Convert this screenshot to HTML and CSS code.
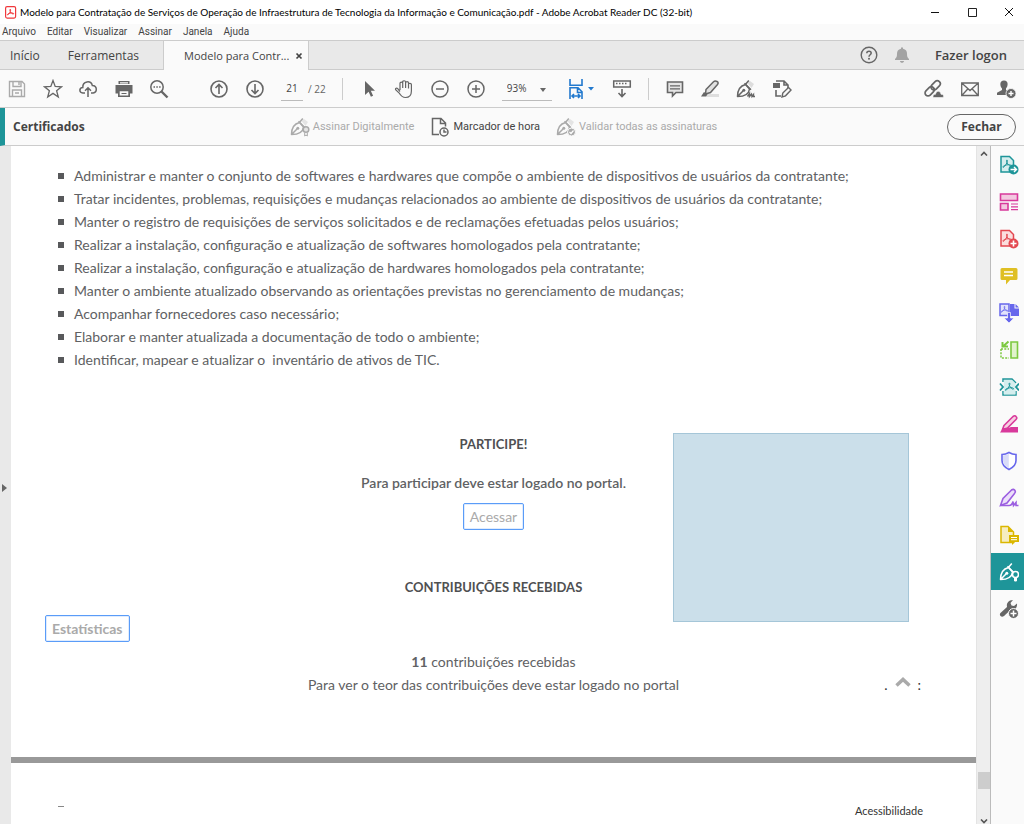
FILE: index.html
```html
<!DOCTYPE html>
<html lang="pt-BR">
<head>
<meta charset="utf-8">
<meta name="viewport" content="width=device-width, initial-scale=1">
<title>Modelo para Contratação de Serviços - Adobe Acrobat Reader DC (32-bit)</title>
<link rel="stylesheet" href="styles.css">
</head>
<body>
<svg class="defs" aria-hidden="true">
  <symbol id="acro" viewBox="0 0 10 10"><path d="M4.800 1C6.200 1 5 4.200 3.500 6.200S.8 9 .9 7.900 4 5.800 6.500 5.700s3.300 1.500 2 1.500S3.600 3 4.800 1z" fill="none" stroke="currentColor" stroke-width="1"/></symbol>
  <symbol id="pen" viewBox="0 0 20 20"><path d="M1.500 17.500C1.500 11 3.500 7 9.500 5.500L13.500 10C13 15 8 17.500 1.500 17.500zM2 17 7 12" fill="none" stroke="currentColor" stroke-width="1.500" stroke-linejoin="round"/><path d="M8.500 4.200 15 10.800M9.800 5 12.800 1.500" fill="none" stroke="currentColor" stroke-width="1.500"/><circle cx="7.800" cy="11.200" r="1.500" fill="currentColor"/></symbol>
</svg>
<div class="app">
  <header class="titlebar">
    <svg class="app-icon" viewBox="0 0 12 13"><rect x=".6" y=".6" width="10" height="11.500" rx="1.500" fill="#fff" stroke="#f0383c" stroke-width="1.200"/><path d="M5 3.300C6.400 3.300 5.300 6 4.200 7.500S2.200 9.300 2.400 8.500 4.800 7 6.700 6.900s2.700 1.200 1.500 1.200S4 4.800 5 3.300z" fill="#f0383c" stroke="#f0383c" stroke-width=".8"/></svg>
    <h1>Modelo para Contratação de Serviços de Operação de Infraestrutura de Tecnologia da Informação e Comunicação.pdf - Adobe Acrobat Reader DC (32-bit)</h1>
    <div class="window-buttons">
      <button aria-label="Minimizar"><svg viewBox="0 0 10 10"><path d="M1 5.500H9" stroke="#111"/></svg></button>
      <button aria-label="Maximizar"><svg viewBox="0 0 10 10"><path d="M1.500 1.500h8v8h-8z" fill="none" stroke="#222"/></svg></button>
      <button aria-label="Fechar janela"><svg viewBox="0 0 10 10"><path d="M1 1 9 9M9 1 1 9" stroke="#111"/></svg></button>
    </div>
  </header>
  <nav class="menubar"><button>Arquivo</button><button>Editar</button><button>Visualizar</button><button>Assinar</button><button>Janela</button><button>Ajuda</button></nav>
  <div class="tabs">
    <button class="tab">Início</button>
    <button class="tab tab-tools">Ferramentas</button>
    <div class="tab-open"><span>Modelo para Contr...</span><button aria-label="Fechar guia"><svg viewBox="0 0 8 8"><path d="M1.500 1.500 6.500 6.500M6.500 1.500 1.500 6.500" stroke="#444" stroke-width="1.700"/></svg></button></div>
    <div class="account">
      <button class="icon" aria-label="Ajuda"><svg viewBox="0 0 20 20"><circle cx="10" cy="10" r="7.800" fill="none" stroke="#666" stroke-width="1.400"/><path d="M7.800 8.200C7.800 5.400 12.200 5.600 12.200 8c0 1.800-2.200 1.800-2.200 3.800" fill="none" stroke="#666" stroke-width="1.500"/><circle cx="10" cy="13.800" r="1" fill="#666"/></svg></button>
      <button class="icon" aria-label="Notificações"><svg viewBox="0 0 20 20"><path d="M9 2.500h2v1.200c3 .5 4 2.500 4 5 0 3 .5 4 2 5.300v1H3v-1c1.500-1.300 2-2.300 2-5.300 0-2.500 1-4.500 4-5zM8 16h4c0 2.400-4 2.400-4 0z" fill="#a3a3a3"/></svg></button>
      <button class="logon">Fazer logon</button>
    </div>
  </div>
  <div class="toolbar">
    <div class="group five">
      <button class="icon faded" aria-label="Salvar"><svg viewBox="0 0 20 20" fill="none" stroke="currentColor" stroke-width="1.400"><path d="M2.500 2.500H15L17.500 5v12.500h-15zM6 2.500v5h8v-5M12 3v3M5.500 17.500v-6.500h9v6.500M8 14h4"/></svg></button>
      <button class="icon" aria-label="Favorito"><svg viewBox="0 0 20 20"><path d="M10 1.500 12.200 7.400 18.500 7.800 13.600 11.700 15.300 18 10 14.400 4.700 18 6.400 11.700 1.500 7.800 7.800 7.400z" fill="none" stroke="currentColor" stroke-width="1.300"/></svg></button>
      <button class="icon" aria-label="Enviar à nuvem"><svg viewBox="0 0 20 20" fill="none" stroke="currentColor" stroke-width="1.500"><path d="M7 14H4.800C.8 13.600 1 8.600 4.800 8.500 4.500 1.700 13 1.200 14.300 6.400c5.300.1 5 7.200.9 7.600H13M10 18V9M7 11.700l3-3 3 3"/></svg></button>
      <button class="icon" aria-label="Imprimir"><svg viewBox="0 0 20 20"><path d="M4.500 2h11v3h-11zM1.500 6h17v8.500h-2.500V11H4v3.500H1.500zM4 11h12v7H4z" fill="currentColor"/><path d="M5.700 12.300h8.600v4.200H5.700zM6 3.200h8v1.200H6z" fill="#fafafa"/><path d="M7.500 14.500h5" stroke="currentColor"/></svg></button>
      <button class="icon" aria-label="Localizar"><svg viewBox="0 0 20 20"><circle cx="8" cy="8" r="6.200" fill="none" stroke="currentColor" stroke-width="1.500"/><path d="M12.500 12.500 18.500 18.500" stroke="currentColor" stroke-width="2.400"/><path d="M4.500 8h1.500M7.300 8h1.500M10.100 8h1.500" stroke="currentColor" stroke-width="1.500"/></svg></button>
    </div>
    <div class="group pages">
      <button class="icon" aria-label="Página anterior"><svg viewBox="0 0 20 20" fill="none" stroke="currentColor" stroke-width="1.600"><circle cx="10" cy="10" r="8"/><path d="M10 15V6M6.500 9 10 5.500 13.500 9"/></svg></button>
      <button class="icon" aria-label="Próxima página"><svg viewBox="0 0 20 20" fill="none" stroke="currentColor" stroke-width="1.600"><circle cx="10" cy="10" r="8"/><path d="M10 5v9M6.500 11 10 14.500 13.500 11"/></svg></button>
      <label class="page-number"><input value="21" aria-label="Página atual"><span>/ 22</span></label>
    </div>
    <div class="divider"></div>
    <div class="group four">
      <button class="icon" aria-label="Selecionar"><svg viewBox="0 0 20 20"><path d="M6 2v14l3.600-3.300 2.300 5 2.200-1-2.300-5h4.200z" fill="currentColor"/></svg></button>
      <button class="icon" aria-label="Mão"><svg viewBox="0 0 20 20" fill="none" stroke="currentColor" stroke-width="1.200"><path d="M6 11V4.300c0-1.700 2.700-1.700 2.700 0V9 3c0-1.700 2.900-1.700 2.900 0v6-5.200c0-1.600 2.900-1.600 2.900 0V9.500 5.500c0-1.600 2.900-1.500 2.900 0V12c0 4-2.100 6.500-5.900 6.500-3.300 0-4.600-1.500-6.300-4.500L1.600 10.600c-.6-1.500 1.300-1.800 2.100-.9L6 12.500"/></svg></button>
      <button class="icon" aria-label="Reduzir"><svg viewBox="0 0 20 20" fill="none" stroke="currentColor" stroke-width="1.500"><circle cx="10" cy="10" r="8"/><path d="M6 10h8"/></svg></button>
      <button class="icon" aria-label="Ampliar"><svg viewBox="0 0 20 20" fill="none" stroke="currentColor" stroke-width="1.500"><circle cx="10" cy="10" r="8"/><path d="M6 10h8M10 6v8"/></svg></button>
    </div>
    <label class="zoom"><select aria-label="Zoom"><option>93%</option></select><svg viewBox="0 0 6 4"><path d="M0 0h6L3 4z" fill="#666"/></svg></label>
    <button class="fit" aria-label="Ajustar à largura"><svg viewBox="0 0 26 20"><g fill="none" stroke="#2279ce" stroke-width="1.600"><path d="M2 0v6.300h12V0M2 20V8.800h8l4 4V20M9.500 9v4.500H14M4 17h8M6 15l-2 2 2 2M10 15l2 2-2 2"/></g><path d="M20 8h6l-3 3.500z" fill="#2279ce"/></svg></button>
    <button class="icon" aria-label="Rolagem"><svg viewBox="0 0 20 20"><path d="M1.700 2h16.600v6H1.700z" fill="none" stroke="currentColor" stroke-width="1.500"/><path d="M4 4.500h1.500M7 4.500h1.500M10 4.500h1.500M13 4.500h1.500M10 10v8M6.500 14l3.500 3.500 3.500-3.500" fill="none" stroke="currentColor" stroke-width="1.600"/></svg></button>
    <div class="divider"></div>
    <div class="group four">
      <button class="icon" aria-label="Comentário"><svg viewBox="0 0 20 20"><path d="M2.500 3h15v10.500H11L7.500 17v-3.500h-5z" fill="#e4e4e4" stroke="currentColor" stroke-width="1.600"/><path d="M5 6.800h10M5 9.800h10" stroke="currentColor" stroke-width="1.300"/></svg></button>
      <button class="icon" aria-label="Realçar"><svg viewBox="0 0 20 20"><path d="M7 15h12v3H6z" fill="#dedede"/><path d="M6 10.500 13.500 2.800Q15 1.500 17 2.500T17.500 5.500L10.500 13.500 5.500 15z" fill="#e0e0e0" stroke="currentColor" stroke-width="1.500"/><path d="M4 13 7.500 15.500 6 17.500H1z" fill="currentColor"/></svg></button>
      <button class="icon" aria-label="Assinar"><svg viewBox="0 0 20 20"><path d="M11.500 4 15.500 9l2.500-4-4-3z" fill="#ddd"/><use href="#pen"/><path d="M11.500 17.500l2-3v3l2-2.500.5 2.500 1.500-2v2H19" fill="none" stroke="currentColor" stroke-width="1.400"/></svg></button>
      <button class="icon" aria-label="Editar PDF"><svg viewBox="0 0 20 20"><path d="M4 2h8l4 4v4M12 2v4h4M4 11v6h5" fill="none" stroke="currentColor" stroke-width="1.600"/><path d="M1 4h7v5H1z" fill="currentColor"/><path d="m10 18 .8-4L16.500 8.500l2.500 2.500-5.500 5.800z" fill="#fafafa" stroke="currentColor" stroke-width="1.400"/></svg></button>
    </div>
    <div class="group share">
      <button class="icon" aria-label="Compartilhar link"><svg viewBox="0 0 20 20"><g transform="rotate(-45 9 9)" fill="none" stroke="currentColor" stroke-width="1.700"><rect x="-1" y="6" width="10.500" height="6" rx="3"/><rect x="7.500" y="6" width="10.500" height="6" rx="3"/></g><path d="M9 18.500c-.5-3 2-3.500 2.500-3.200.5-4 5-4 5.500 0 3-.3 3.500 3.200 1 3.200z" fill="currentColor" stroke="#fafafa" stroke-width=".6"/></svg></button>
      <button class="icon" aria-label="E-mail"><svg viewBox="0 0 20 20" fill="none" stroke="currentColor" stroke-width="1.300"><path d="M1.700 4h16.600v12.500H1.700zM2 4.200l8 7.300 8-7.300M2 16.300l6-6.500M18 16.300l-6-6.500"/></svg></button>
      <button class="icon" aria-label="Adicionar pessoa"><svg viewBox="0 0 20 20"><path d="M8 1.500c5 0 4 6 2 8v1.500l4 2V16H1v-2.200l5-2.800V9.500c-2-2-3-8 2-8z" fill="currentColor"/><circle cx="15" cy="14.500" r="5" fill="currentColor" stroke="#fafafa" stroke-width=".8"/><path d="M12.500 14.500h5M15 12v5" stroke="#fff" stroke-width="1.400"/></svg></button>
    </div>
  </div>
  <div class="certbar">
    <h2>Certificados</h2>
    <div class="cert-actions">
      <button class="action" disabled><svg viewBox="0 0 20 20"><path d="M11.500 4 15.500 9l2.500-4-4-3z" fill="#e4e4e4"/><use href="#pen"/><circle cx="16" cy="12.500" r="2.800" fill="#e4e4e4" stroke="currentColor" stroke-width="1.500"/><path d="M14.700 15.500V19l1.300-1 1.300 1v-3.500" fill="none" stroke="currentColor"/></svg>Assinar Digitalmente</button>
      <button class="action"><svg viewBox="0 0 20 20" fill="none" stroke="currentColor" stroke-width="1.500"><path d="M9 17.500H2.500v-16H11L15.500 6v3.500M10.500 1.500V6.500h5"/><circle cx="14" cy="15" r="4"/><path d="M14 12.500V15h2.500"/></svg>Marcador de hora</button>
      <button class="action" disabled><svg viewBox="0 0 20 20"><path d="M11.500 4 15.500 9l2.500-4-4-3z" fill="#e4e4e4"/><use href="#pen"/><circle cx="15.500" cy="15" r="4" fill="currentColor" stroke="#fafafa"/><path d="m13.500 15 1.500 1.500 2.500-3" fill="none" stroke="#fff" stroke-width="1.200"/></svg>Validar todas as assinaturas</button>
    </div>
    <button class="close">Fechar</button>
  </div>
  <div class="workspace">
    <button class="pane-toggle" aria-label="Expandir painel"><svg viewBox="0 0 5 8"><path d="M0 0 5 4 0 8z" fill="#666"/></svg></button>
    <main class="document">
      <article class="page">
        <ul class="duties">
          <li>Administrar e manter o conjunto de softwares e hardwares que compõe o ambiente de dispositivos de usuários da contratante;</li>
          <li>Tratar incidentes, problemas, requisições e mudanças relacionados ao ambiente de dispositivos de usuários da contratante;</li>
          <li>Manter o registro de requisições de serviços solicitados e de reclamações efetuadas pelos usuários;</li>
          <li>Realizar a instalação, configuração e atualização de softwares homologados pela contratante;</li>
          <li>Realizar a instalação, configuração e atualização de hardwares homologados pela contratante;</li>
          <li>Manter o ambiente atualizado observando as orientações previstas no gerenciamento de mudanças;</li>
          <li>Acompanhar fornecedores caso necessário;</li>
          <li>Elaborar e manter atualizada a documentação de todo o ambiente;</li>
          <li>Identificar, mapear e atualizar o&nbsp; inventário de ativos de TIC.</li>
        </ul>
        <section class="participate">
          <h3>PARTICIPE!</h3>
          <p class="notice">Para participar deve estar logado no portal.</p>
          <a class="link-box" href="#">Acessar</a>
          <h3 class="received">CONTRIBUIÇÕES RECEBIDAS</h3>
          <div class="signature-field"></div>
        </section>
        <a class="link-box stats" href="#">Estatísticas</a>
        <section class="summary">
          <p><b>11</b> contribuições recebidas</p>
          <div class="last-row"><p>Para ver o teor das contribuições deve estar logado no portal</p>
            <div class="back-top"><span>.</span><svg viewBox="0 0 16 10"><path d="M1.500 8.500 8 2.500l6.500 6" fill="none" stroke="#aaa" stroke-width="3.500"/></svg><span>:</span></div></div>
        </section>
      </article>
      <article class="page next-page"><span class="dash"></span><a href="#">Acessibilidade</a></article>
    </main>
    <div class="scrollbar">
      <svg viewBox="0 0 8 5"><path d="M1 4.500 4 1.500l3 3" fill="none" stroke="#555" stroke-width="1.600"/></svg>
      <div class="thumb"></div>
      <svg viewBox="0 0 8 5"><path d="M1 .5 4 3.500l3-3" fill="none" stroke="#555" stroke-width="1.600"/></svg>
    </div>
    <nav class="tools">
      <button class="teal" aria-label="Exportar PDF"><svg viewBox="0 0 20 20"><path d="M2 1.500h8.500L14.500 5.500v11.500H2z" fill="#d5eeee" stroke="currentColor" stroke-width="1.500"/><use href="#acro" x="3" y="4" width="10" height="10"/><circle cx="14.500" cy="14.500" r="5" fill="currentColor"/><path d="M11.500 14.500H17M15 12l2.500 2.500L15 17" fill="none" stroke="#fff" stroke-width="1.400"/></svg></button>
      <button class="pink" aria-label="Organizar páginas"><svg viewBox="0 0 20 20"><path d="M1.500 2h17v6.500h-17zM1.500 11.500H9V18H1.500z" fill="#f3c8e0" stroke="currentColor" stroke-width="1.600"/><path d="M12 12h7M12 14.800h7M12 17.600h7" stroke="currentColor" stroke-width="1.200"/></svg></button>
      <button class="red" aria-label="Criar PDF"><svg viewBox="0 0 20 20"><path d="M2 1.500h8.500L14.500 5.500v11.500H2z" fill="#fbdede" stroke="currentColor" stroke-width="1.500"/><use href="#acro" x="3" y="4" width="10" height="10"/><circle cx="14.500" cy="14.500" r="5" fill="currentColor"/><path d="M11.500 14.500h6M14.500 11.500v6" stroke="#fff" stroke-width="1.600"/></svg></button>
      <button class="yellow" aria-label="Comentar"><svg viewBox="0 0 20 20"><path d="M3 2h14q1.500 0 1.500 1.500v9q0 1.500-1.500 1.500h-6l-4 4.500V14H3q-1.500 0-1.500-1.500v-9Q1.500 2 3 2z" fill="currentColor"/><path d="M5 6h9M5 9.500h9" stroke="#fff" stroke-width="1.300"/></svg></button>
      <button class="blue" aria-label="Combinar arquivos"><svg viewBox="0 0 20 20"><path d="M1 1h9v11.500H1z" fill="#e2e3fb" stroke="currentColor" stroke-width="1.500"/><use href="#acro" x="1.500" y="2.500" width="8" height="8"/><path d="M11 1h4.500v4.500H20V13h-9zM16.500 1 20 4.500h-3.500z" fill="currentColor"/><path d="M8.500 9.500h3V15h3.500L10 20 5 15h3.500z" fill="currentColor" stroke="#fafafa" stroke-width=".7"/></svg></button>
      <button class="green" aria-label="Comparar"><svg viewBox="0 0 20 20"><path d="M12 2h6.500v16H12z" fill="#e1f3cd" stroke="currentColor" stroke-width="1.600"/><path d="M2 9V18h8M2 9h8" fill="none" stroke="currentColor" stroke-width="1.500" stroke-dasharray="2 1.300"/><path d="M9.500 1.500 4.500 6M3.500 2v4.500H9" fill="none" stroke="currentColor" stroke-width="2"/></svg></button>
      <button class="teal" aria-label="Compactar PDF"><svg viewBox="0 0 20 20"><path d="M4 5V2h9l4 4M4 14v4h13v-4" fill="none" stroke="currentColor" stroke-width="1.500"/><path d="M4.800 3H13l3.500 3.500v11H4.800z" fill="#d5eeee"/><use href="#acro" x="5.500" y="5" width="10" height="10"/><path d="m1 6.500 3 3.500-3 3.500M20 6.500 17 10l3 3.500" fill="none" stroke="currentColor" stroke-width="1.800"/></svg></button>
      <button class="pink" aria-label="Corrigir"><svg viewBox="0 0 20 20"><path d="M5 11.500 14 2.500q2-1.500 3 0 1.500 1.500 0 3L8.500 14l-5 1.500z" fill="#f7cfe2" stroke="currentColor" stroke-width="1.600"/><path d="M1 18.500 4 14h5l3-1h7v5.500z" fill="currentColor"/></svg></button>
      <button class="blue" aria-label="Proteger"><svg viewBox="0 0 20 20"><path d="M10 1.500c2.500 1.500 4.500 2 7 2v6c0 4-2.800 7-7 9-4.200-2-7-5-7-9v-6c2.500 0 4.500-.5 7-2z" fill="#fff" stroke="currentColor" stroke-width="1.600"/><path d="M9.800 2.800v14.500c-3.700-2-5.800-4.500-5.800-7.800v-5c2 0 4-.6 5.800-1.700z" fill="#d9dcf8"/></svg></button>
      <button class="purple" aria-label="Preencher e assinar"><svg viewBox="0 0 20 20" fill="none" stroke="currentColor" stroke-width="1.600"><path d="m1.500 17.500 2.500-7L12.500 2q2-1.500 3.500.5 1 1.500-.5 3L8 15z" fill="#ecdffa"/><path d="M1.500 17.500H10q3 0 4-4l.5 4 2.500-3v3h2.500"/></svg></button>
      <button class="gold" aria-label="Enviar para comentários"><svg viewBox="0 0 20 20"><path d="M2 1.500h7L14.500 7v10.500H2z" fill="#f6edc0" stroke="currentColor" stroke-width="1.500"/><path d="M9 1.500V7h5.500M10 10h10v7h-4l-3 3v-3h-3z" fill="currentColor"/><path d="M12 12.500h6M12 14.700h6" stroke="#fff"/></svg></button>
      <button class="active" aria-label="Certificados"><svg viewBox="0 0 20 20"><use href="#pen"/><circle cx="16.500" cy="12.500" r="3" fill="#1e9599" stroke="#fff" stroke-width="1.600"/><path d="M15.500 15.500h2V19h-2z" fill="#fff" stroke="#fff"/></svg></button>
      <button aria-label="Mais ferramentas"><svg viewBox="0 0 20 20"><path d="M1.500 17q-1.500-2 .5-3.500L8 8Q7 3.500 11 1.500l3-.5-2.500 3 1 2.500L15 7l3-2.500c.5 4-2 7-6 6L5 17q-2 1.500-3.500 0z" fill="#666"/><circle cx="14.500" cy="14.500" r="5" fill="#666" stroke="#fafafa"/><path d="M11.500 14.500h6M14.500 11.500v6" stroke="#fff" stroke-width="1.500"/></svg></button>
    </nav>
  </div>
</div>
</body>
</html>
```
FILE: styles.css
```css
* { box-sizing: border-box; }
body { margin: 0; font-family: "Open Sans", "Noto Sans", sans-serif; font-size: 12px; color: #444; background: #fff; }
button { padding: 0; border: 0; background: none; color: inherit; font: inherit; white-space: nowrap; }
h1, h2, h3, p, ul { margin: 0; padding: 0; font-weight: inherit; font-size: inherit; }
svg { display: block; flex: none; }
.defs { position: absolute; width: 0; height: 0; }
.app { display: flex; flex-direction: column; height: 100vh; overflow: hidden; }

.titlebar { display: flex; align-items: center; height: 24px; flex: none; padding-left: 5px; color: #000; font-family: Lato, sans-serif; font-size: 10px; }
.app-icon { width: 12px; height: 13px; margin-right: 3px; }
.titlebar h1 { flex: 1; white-space: nowrap; overflow: hidden; }
.window-buttons { display: flex; gap: 27px; padding-right: 10px; }
.window-buttons svg { width: 10px; height: 10px; }

.menubar { display: flex; gap: 11px; flex: none; height: 17px; padding-left: 2px; background: #fafafa; border-bottom: 1px solid #ccc; font-family: Roboto, sans-serif; font-size: 10px; line-height: 16px; }
.tabs { display: flex; flex: none; height: 29px; background: #e9e9e9; border-bottom: 1px solid #ccc; }
.tab { padding-left: 10px; }
.tab-tools { padding: 0 24px 0 28px; }
.tab-open { display: flex; align-items: center; gap: 6px; height: 29px; padding: 0 5px 0 20px; background: #fafafa; border: solid #ccc; border-width: 0 1px; font-size: 11px; }
.tab-open svg { width: 8px; height: 8px; }
.account { display: flex; align-items: center; gap: 13px; margin-left: auto; padding-right: 17px; }
.logon { margin-left: 10px; font-size: 13px; font-weight: 600; }

.icon, .icon svg { width: 20px; height: 20px; }
.toolbar { display: flex; align-items: center; flex: none; gap: 16px; height: 38px; padding: 0 8px 0 7px; background: #fafafa; border-bottom: 1px solid #ccc; color: #666; }
.group { display: flex; justify-content: space-between; }
.five { width: 162px; }
.four { width: 127px; }
.pages { align-items: center; gap: 16px; margin-left: 24px; }
.page-number { display: flex; align-items: center; gap: 5px; font-size: 10px; }
.page-number input { width: 22px; height: 24px; padding: 0; border: 0; border-bottom: 1px solid #bbb; background: none; color: #444; font: inherit; text-align: center; }
.divider { width: 1px; height: 22px; background: #ccc; }
.zoom { position: relative; }
.zoom select { appearance: none; display: block; width: 50px; height: 24px; padding: 0 0 0 5px; border: 0; border-bottom: 1px solid #bbb; border-radius: 0; background: none; color: #444; font: inherit; font-size: 10px; }
.zoom svg { position: absolute; right: 6px; top: 11px; width: 6px; height: 4px; pointer-events: none; }
.fit { margin-right: 2px; }
.fit svg { width: 26px; height: 20px; }
.faded { color: #aaa; }
.share { gap: 16px; margin-left: auto; }

.certbar { display: flex; align-items: center; flex: none; height: 38px; padding-right: 8px; background: #fafafa; border-left: 5px solid #1e9599; border-bottom: 1px solid #ccc; }
.certbar h2 { flex: 1; padding-left: 8px; font-size: 12px; font-weight: 700; }
.cert-actions { display: flex; gap: 16px; padding-right: 22px; font-family: Roboto, sans-serif; font-size: 11px; }
.action { display: flex; align-items: center; gap: 3px; }
.action svg { width: 20px; height: 20px; color: #666; }
.action:disabled, .action:disabled svg { color: #aaa; }
.certbar::after { content: ""; order: 1; flex: 1; margin-right: -69px; }
.close { order: 2; width: 69px; height: 26px; border: 1px solid #666; border-radius: 13px; font-weight: 700; }

.workspace { display: flex; flex: 1; min-height: 0; }
.pane-toggle { display: flex; align-items: center; width: 11px; flex: none; padding: 5px 0 0 2px; background: #e9e9e9; }
.pane-toggle svg { width: 5px; height: 8px; }
.document { flex: 1; min-width: 0; overflow: hidden; color: #606163; font: 14px/23px Lato, sans-serif; }
.page { padding: 18px 0 61px; }
.duties { padding-left: 47px; list-style: none; }
.duties li { display: flex; align-items: center; gap: 10px; white-space: nowrap; }
.duties li::before { content: ""; width: 6px; height: 6px; background: #58595b; }
.participate { position: relative; display: flex; flex-direction: column; align-items: center; margin-top: 62px; }
.participate h3 { font-weight: 700; font-size: 13px; color: #4f5052; }
.notice { margin: 15px 0 9px; font-weight: 600; }
.link-box { display: block; width: fit-content; padding: 1px 6px; border: 1px solid #5a9cf8; border-radius: 2px; box-shadow: inset 0 0 0 1px #e0ecfe; color: #aaa; text-decoration: none; }
.participate .received { margin-top: 46px; }
.signature-field { position: absolute; top: 0; right: 67px; width: 236px; height: 189px; background: #cbdfea; border: 1px solid #a5c6d8; }
.stats { margin: 16px 0 8px 34px; font-weight: 700; }
.summary { text-align: center; }
.last-row { display: grid; grid-template-columns: 1fr auto 1fr; }
.last-row p { grid-column: 2; }
.back-top { display: flex; justify-content: flex-end; align-items: center; gap: 7px; padding-right: 55px; color: #333; }
.back-top svg { width: 16px; height: 10px; margin-bottom: 6px; }
.next-page { display: flex; justify-content: space-between; padding: 36px 53px 0 47px; border-top: 6px solid #999; color: #333; font-size: 11px; }
.next-page a { color: inherit; text-decoration: none; }
.dash { width: 6px; height: 1px; margin-top: 7px; background: #888; }

.scrollbar { display: flex; flex-direction: column; align-items: center; width: 15px; flex: none; padding-top: 5px; background: #eee; border-left: 1px solid #e4e4e4; border-right: 1px solid #bbb; }
.scrollbar svg { width: 8px; height: 5px; }
.thumb { width: 12px; height: 17px; margin: auto 0 30px; background: #cdcdcd; }
.tools { width: 33px; flex: none; background: #fafafa; }
.tools button { display: flex; align-items: center; justify-content: center; width: 100%; height: 37px; padding-left: 3px; }
.tools svg { width: 20px; height: 20px; }
.teal { color: #1e9599; }
.pink { color: #d8399b; }
.red { color: #e34850; }
.yellow { color: #dfbf23; }
.blue { color: #6767ec; }
.green { color: #7cc940; }
.purple { color: #9b5ee0; }
.gold { color: #dbb700; }
.tools .active { background: #1e9599; color: #fff; }
```
